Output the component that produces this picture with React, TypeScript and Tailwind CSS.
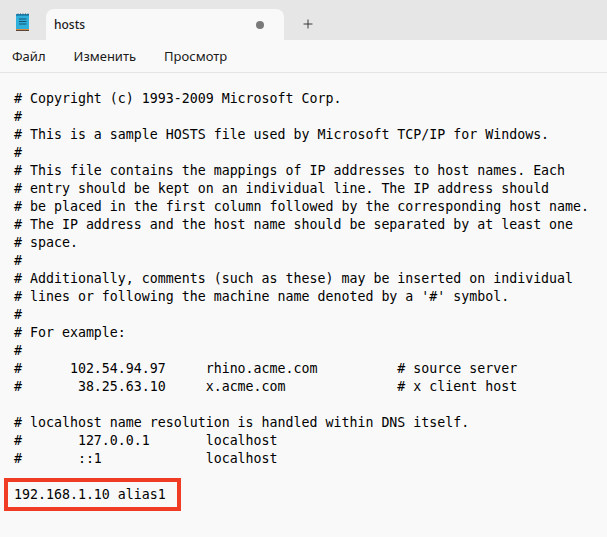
import React from 'react';
import { Plus } from 'lucide-react';

const hostsText = `# Copyright (c) 1993-2009 Microsoft Corp.
#
# This is a sample HOSTS file used by Microsoft TCP/IP for Windows.
#
# This file contains the mappings of IP addresses to host names. Each
# entry should be kept on an individual line. The IP address should
# be placed in the first column followed by the corresponding host name.
# The IP address and the host name should be separated by at least one
# space.
#
# Additionally, comments (such as these) may be inserted on individual
# lines or following the machine name denoted by a '#' symbol.
#
# For example:
#
#      102.54.94.97     rhino.acme.com          # source server
#       38.25.63.10     x.acme.com              # x client host

# localhost name resolution is handled within DNS itself.
#       127.0.0.1       localhost
#       ::1             localhost

192.168.1.10 alias1`;

const NotepadIcon = () => (
  <svg width="16" height="20" viewBox="0 0 16 20">
    <rect x="1" y="2" width="13" height="15" fill="#2fb0dc" />
    <rect x="1" y="2" width="13" height="2" fill="#1c86b4" />
    <path d="M3 1.5V3M5.5 1.5V3M8 1.5V3M10.5 1.5V3M13 1.5V3" stroke="#2a5f7a" strokeWidth="1" />
    <path d="M4 7H11.5M4 9.5H11.5M4 12H11.5" stroke="#14516f" strokeWidth="1" />
    <rect x="1" y="17" width="13" height="1" fill="#d98a3d" />
    <rect x="1" y="18" width="13" height="1" fill="#5a4636" />
  </svg>
);

export default function App() {
  return (
    <div className="relative h-[537px] w-[607px] overflow-hidden bg-[#f9f9f9] font-['Noto_Sans',sans-serif] text-[#1a1a1a]">
      <div className="flex h-10 items-end bg-[#e6e6e6]">
        <div className="flex h-10 w-[46px] items-center justify-center pt-1">
          <NotepadIcon />
        </div>
        <div className="flex h-[31px] w-[238px] items-center justify-between rounded-t-lg bg-[#f9f9f9] pl-2 pr-5">
          <span className="text-xs font-medium">hosts</span>
          <span className="h-2 w-2 rounded-full bg-[#7a7a7a]" />
        </div>
        <div className="flex h-10 w-12 items-center justify-center pt-2">
          <Plus size={14} strokeWidth={1.5} color="#222222" />
        </div>
      </div>
      <div className="flex h-[33px] items-center gap-7 border-b border-[#e4e4e4] px-3 pt-0.5 text-[13px]">
        <span>Файл</span>
        <span>Изменить</span>
        <span>Просмотр</span>
      </div>
      <pre className="pl-3.5 pt-[17px] font-['DejaVu_Sans_Mono',monospace] text-[13.28px] leading-[18px] text-black">{hostsText}</pre>
      <div className="absolute left-1 top-[478px] h-[33px] w-[177px] border-4 border-[#f03c24]" />
    </div>
  );
}
